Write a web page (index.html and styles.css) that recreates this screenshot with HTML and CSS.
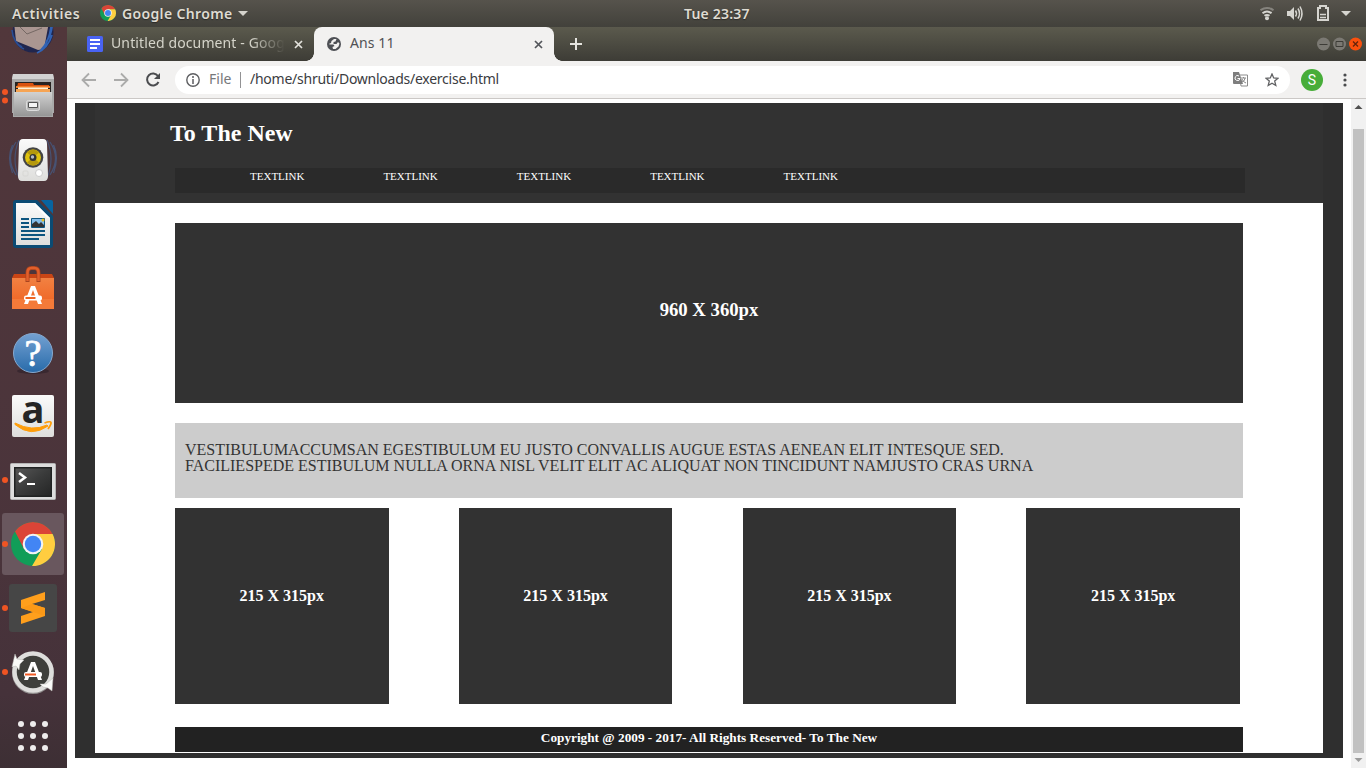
FILE: index.html
```html
<!DOCTYPE html>
<html lang="en">
<head>
<meta charset="utf-8">
<title>Ans 11</title>
<link rel="stylesheet" href="styles.css">
</head>
<body>
<header class="topbar">
  <span class="activities">Activities</span>
  <svg class="app-icon" viewBox="0 0 44 44"><use href="#chrome-logo"/></svg>
  <span class="app-name">Google Chrome</span>
  <svg class="caret" width="10" height="5"><path d="M0 0h10L5 5z" fill="#d5d3cd"/></svg>
  <span class="clock">Tue 23:37</span>
  <svg class="tray" width="106" height="27" fill="none" stroke="#d6d5d0">
    <g stroke-width="2"><path d="M.5 10.200q6.500-4.500 13 0" stroke="#85837d"/><path d="M2.500 13.200q4.500-3.500 9 0"/><path d="M4.500 15.800q2.500-1.800 5 0"/></g>
    <circle cx="7" cy="18.200" r="2" fill="#d6d5d0" stroke="none"/>
    <path d="M27 11h3l4-4v13l-4-4h-3z" fill="#d6d5d0" stroke="none"/>
    <path d="M35.500 10.500q2 3 0 6M38 8.500q3 5 0 10M40 6.500q4 7 0 14" stroke-width="1.500"/>
    <path d="M58 8h2V6h6v2h2v12H58z" stroke-width="2"/><path d="M60 14.500h6M60 17.500h6" stroke-width="1.500"/>
    <path d="M81 11h10l-5 5z" fill="#d6d5d0" stroke="none"/>
  </svg>
</header>
<div class="desktop">
  <nav class="dock">
    <div class="dock-items">
      <svg class="dock-item" viewBox="0 0 67 64">
        <circle cx="33" cy="32" r="20.500" fill="#20264e"/>
        <path d="M14 22h35l-5 27-6 1-22-9z" fill="#aa9691"/><path d="M20 27l7 7 15-6" fill="none" stroke="#756864"/>
        <path d="M41 50q8-8 10-23M37 53q11-5 15-18M46 42q5-6 6-15" fill="none" stroke="#3263b4" stroke-width="1.800"/><path d="M12 30q1 12 10 17M14 38q3 8 10 11" fill="none" stroke="#294d94" stroke-width="1.600"/>
      </svg>
      <svg class="dock-item" viewBox="0 0 67 64">
        <g fill="#f05423"><circle cx="5" cy="28" r="3"/><circle cx="5" cy="36.500" r="3"/></g>
        <path d="M13 10h40l1 5v34h-1v4H13v-4h-1V15z" fill="#a9a9a9"/><path d="M13 10h40l1 5H12z" fill="#d2d2d2"/>
        <path d="M15 18h36v10H15z" fill="#282321"/><path d="M18 19h15l1 2h15v2H17z" fill="#d9520f"/><path d="M16 22h34v2H16z" fill="#f07c28"/><path d="M18 23.500h30v1.500H18z" fill="#fff0d5"/><path d="M16 25h34v3H16z" fill="#f6a454"/>
        <path d="M14 28h38v24H14z" fill="url(#metal)"/>
        <rect x="26.500" y="36.500" width="13" height="10" rx="2" fill="#b9b9b9" stroke="#ddd"/><path d="M28.500 38.500h9v5h-9z" fill="#f5f5f5" stroke="#555"/>
      </svg>
      <svg class="dock-item" viewBox="0 0 67 64">
        <g fill="none" stroke="#475273" stroke-width="1.200"><path d="M16 14q-11 16 0 33M12.500 17q-6 12 0 28M19 12q-8 19 0 38M50 14q11 16 0 33M53.500 17q6 12 0 28M47 12q8 19 0 38"/></g>
        <path d="M23 11h20q4 0 4 5l1 32q0 5-4 5H22q-4 0-4-5l1-32q0-5 4-5z" fill="url(#white)"/>
        <circle cx="33" cy="29.500" r="10.300" fill="#444"/><circle cx="33" cy="29.500" r="8" fill="#dfc20e"/><path d="M33 29.500l-6-5q6-6 12 0zM33 29.500l-6 5q6 6 12 0z" fill="#b4980c"/><circle cx="33" cy="29.500" r="3.500" fill="#333"/><circle cx="32.500" cy="29" r="1.700" fill="#b5bbc5"/><circle cx="39" cy="45" r="3.500" fill="#fff" stroke="#ccc"/><rect x="23" y="43" width="5" height="5" rx="1" fill="none" stroke="#d7d7d4"/>
      </svg>
      <svg class="dock-item" viewBox="0 0 67 64">
        <path d="M16 8h21l16 16v29q0 3-3 3H16q-3 0-3-3V11q0-3 3-3z" fill="#0b4b74"/><path d="M41 8h10q2 0 2 2v12z" fill="#0864a0"/>
        <path d="M16 11h19l15 15v27H16z" fill="url(#white)"/><path d="M35 11v3l12 12h3z" fill="#fff"/>
        <path d="M21 27h8M21 31h8M21 35h8M21 39h24M21 43h24M21 47h18" stroke="#0d557f" stroke-width="2"/>
        <path d="M31.500 26.500h13v9h-13z" fill="#83bde9" stroke="#0d557f"/><path d="M32 35v-3l4-3 3 3 2-2 3 3v2z" fill="#333"/><circle cx="43" cy="28" r="1.500" fill="#e8ba24"/>
      </svg>
      <svg class="dock-item" viewBox="0 0 67 64">
        <path d="M14 18h38l2 4v31H12V22z" fill="#c94515"/><path d="M12 22h42v31H12z" fill="url(#orange)"/><path d="M12 43h42v10H12z" fill="#f47a39"/>
        <path d="M27.500 26v-9q0-5 4-5h3q4 0 4 5v9" fill="none" stroke="#a8441f" stroke-width="4"/><path d="M27.500 25v-8q0-5 4-5h3q4 0 4 5v8" fill="none" stroke="#e25f2b" stroke-width="2.500"/>
        <path d="M31 30h4l7 18h-4l-5-14-5 14h-4z" fill="#fff"/><rect x="24" y="39.500" width="18" height="5" rx="2" fill="#fff"/><path d="M25.500 42h10" stroke="#ef6422" stroke-width="2"/>
      </svg>
      <svg class="dock-item" viewBox="0 0 67 64">
        <ellipse cx="33" cy="51" rx="16" ry="3" fill="#392830"/><circle cx="33" cy="33" r="19.500" fill="url(#blue)" stroke="#86a9cf"/>
        <text x="33" y="46" class="help-mark" text-anchor="middle">?</text>
      </svg>
      <svg class="dock-item" viewBox="0 0 67 64">
        <rect x="12" y="11" width="42" height="42" rx="2" fill="url(#white)"/><text x="33" y="39" class="amazon-mark" text-anchor="middle">a</text>
        <path d="M15 39q17 9 32 2l1 1q-17 12-33-1.500z" fill="#ff9d0a" stroke="#ff9d0a"/><path d="M44.500 39q6-2 6.500-.5t-3 6.500" fill="none" stroke="#ff9d0a" stroke-width="1.800"/>
      </svg>
      <svg class="dock-item" viewBox="0 0 67 64">
        <circle cx="5" cy="32" r="3" fill="#f05423"/><rect x="10.500" y="15.500" width="45" height="36" rx="1" fill="#ddd" stroke="#b5b5b5"/><path d="M14 19h38v30H14z" fill="#202222"/><path d="M15.500 20.500h35v27h-35z" fill="url(#screen)"/>
        <path d="M19 25l6 4.500-6 4.500" fill="none" stroke="#fff" stroke-width="2.500"/><path d="M27 36h8" stroke="#fff" stroke-width="2"/>
      </svg>
      <svg class="dock-item" viewBox="0 0 67 64">
        <rect x="2" y="1" width="62" height="62" rx="3" fill="#69575e"/><circle cx="5" cy="32" r="3" fill="#f05423"/>
        <g transform="translate(11 10)"><use href="#chrome-logo"/></g>
      </svg>
      <svg class="dock-item" viewBox="0 0 67 64">
        <circle cx="5" cy="32" r="3" fill="#f05423"/><rect x="9" y="8" width="48" height="48" rx="3" fill="#464646"/>
        <path d="M21 24l24-8v8l-13 4 13 4v8l-24 8v-8l12-4-12-4z" fill="#ff9f1c"/><path d="M21 32l24 8v-8l-13-4z" fill="#fb9917"/>
      </svg>
      <svg class="dock-item" viewBox="0 0 67 64">
        <circle cx="5" cy="32" r="3" fill="#f05423"/><circle cx="33" cy="33" r="21" fill="#8f8c8c"/><circle cx="33" cy="32" r="18.500" fill="#3e3f3b" stroke="#dededc" stroke-width="4.500"/>
        <path d="M15 14l2 5 7 1-4 4-1 6-3-4-4 1zM53 38l-1 13-4-3-5-1-3-3 6 0z" fill="#fafaf8" stroke="#b7b6b3" stroke-width=".5"/>
        <path d="M31 22h4l7 18h-4l-5-14-5 14h-4z" fill="#fff"/><rect x="24" y="32" width="18" height="5" rx="2" fill="#fff"/><path d="M25 34.500h11" stroke="#f05b24" stroke-width="2"/>
      </svg>
      <svg class="dock-item" viewBox="0 0 67 64">
        <g fill="#eeecec"><circle cx="21" cy="20" r="3"/><circle cx="33" cy="20" r="3"/><circle cx="45" cy="20" r="3"/><circle cx="21" cy="32" r="3"/><circle cx="33" cy="32" r="3"/><circle cx="45" cy="32" r="3"/><circle cx="21" cy="44" r="3"/><circle cx="33" cy="44" r="3"/><circle cx="45" cy="44" r="3"/></g>
      </svg>
    </div>
  </nav>
  <section class="browser">
    <div class="tabs">
      <div class="tab">
        <svg width="16" height="16"><rect width="16" height="16" rx="1.500" fill="#4963f3"/><path d="M3 4h10M3 8h10M3 12h7" stroke="#fff" stroke-width="2"/></svg>
        <span class="tab-title faded">Untitled document - Goog</span>
        <svg width="9" height="9"><path d="M1 1l7 7M8 1l-7 7" stroke="#e3e2dc" stroke-width="1.700"/></svg>
      </div>
      <div class="tab active">
        <svg width="14" height="14" viewBox="0 0 14 14"><circle cx="7" cy="7" r="7" fill="#4e5055"/><path d="M7 2h2.500l-1 2.500-2 .5v2h3l1.500-2 1.500 1.500-1 3-3 2.500H6l-.5-2 2-1-1-1.500H3L1.800 7 4 6l.5-2z" fill="#f2f1f0"/></svg>
        <span class="tab-title">Ans 11</span>
        <svg width="9" height="9"><path d="M1 1l7 7M8 1l-7 7" stroke="#53555a" stroke-width="1.700"/></svg>
      </div>
      <svg class="new-tab" width="12" height="12"><path d="M0 6h12M6 0v12" stroke="#e5e4df" stroke-width="2"/></svg>
      <svg class="window-buttons" width="48" height="16">
        <circle cx="7.500" cy="8" r="6.500" fill="#7b7973"/><path d="M3.500 8.500h8" stroke="#3d3c37"/>
        <circle cx="23.500" cy="8" r="6.500" fill="#7b7973"/><path d="M20 5.500h7v5h-7z" stroke="#3d3c37" fill="none"/>
        <circle cx="39.500" cy="8" r="6.500" fill="#f9500d"/><path d="M37 5.500l5 5M42 5.500l-5 5" stroke="#65240c" stroke-width="1.300"/>
      </svg>
    </div>
    <div class="toolbar">
      <svg class="nav-icons" width="108" height="36" fill="none" stroke="#ababaa" stroke-width="1.800">
        <path d="M29 18H16M22 11.500L15.500 18l6.500 6.500M47 18h13M54 11.500l6.500 6.500-6.500 6.500"/>
        <path d="M91 14a6 6 0 1 0 .5 6" stroke="#4b4c4f" stroke-width="2"/><path d="M93 11v6h-6z" fill="#4b4c4f" stroke="none"/>
      </svg>
      <div class="address">
        <svg width="14" height="14"><circle cx="7" cy="7" r="6.200" fill="none" stroke="#5d5e61" stroke-width="1.400"/><path d="M7 3v2M7 6v5" stroke="#5d5e61" stroke-width="1.500"/></svg>
        <span class="scheme">File</span><i class="divider"></i><span class="url">/home/shruti/Downloads/exercise.html</span>
        <svg class="translate" width="15" height="15"><path d="M6.500 3h8v11H8z" fill="#fff" stroke="#8b8b8b"/><path d="M0 0h6l4 12H1q-1 0-1-1z" fill="#7e7e7e"/><path d="M6 4a2.500 2.500 0 1 0 1 2.500H4.500" fill="none" stroke="#fff"/><path d="M8 6h5M10.500 5v1M12 6q0 3-3 4M9 7q1 3 4 4" fill="none" stroke="#888"/></svg>
        <svg class="star" width="14" height="14"><path d="M7 1l1.700 4 4.300.3-3.300 2.800 1.100 4.400L7 10.200l-3.800 2.300 1.100-4.400L1 5.300 5.300 5z" fill="none" stroke="#606163" stroke-width="1.300"/></svg>
      </div>
      <span class="avatar">S</span>
      <svg class="more" width="4" height="14" fill="#4a4b4d"><circle cx="2" cy="2" r="1.600"/><circle cx="2" cy="7" r="1.600"/><circle cx="2" cy="12" r="1.600"/></svg>
    </div>
    <div class="viewport">
      <main class="page">
        <div class="site">
          <header class="site-header"><h1>To The New</h1>
            <nav class="links"><a>TEXTLINK</a><a>TEXTLINK</a><a>TEXTLINK</a><a>TEXTLINK</a><a>TEXTLINK</a></nav>
          </header>
          <div class="content">
            <section class="hero">960 X 360px</section>
            <p class="intro">VESTIBULUMACCUMSAN EGESTIBULUM EU JUSTO CONVALLIS AUGUE ESTAS AENEAN ELIT INTESQUE SED.<br>FACILIESPEDE ESTIBULUM NULLA ORNA NISL VELIT ELIT AC ALIQUAT NON TINCIDUNT NAMJUSTO CRAS URNA</p>
            <section class="cards"><div class="card">215 X 315px</div><div class="card">215 X 315px</div><div class="card">215 X 315px</div><div class="card">215 X 315px</div></section>
            <footer class="copyright">Copyright @ 2009 - 2017- All Rights Reserved- To The New</footer>
          </div>
        </div>
      </main>
      <div class="scrollbar">
        <svg width="15" height="30"><path d="M3.500 10h8l-4-4z" fill="#505050"/></svg>
        <div class="thumb"></div>
        <svg width="15" height="15"><path d="M3.500 5h8l-4 4z" fill="#9b9b9b"/></svg>
      </div>
    </div>
  </section>
</div>
<svg class="defs" width="0" height="0">
  <defs>
    <linearGradient id="metal" x2="0" y2="1"><stop stop-color="#d2d2d2"/><stop offset="1" stop-color="#969696"/></linearGradient>
    <linearGradient id="white" x2="0" y2="1"><stop stop-color="#fafafa"/><stop offset="1" stop-color="#dededc"/></linearGradient>
    <linearGradient id="orange" x2="0" y2="1"><stop stop-color="#f18142"/><stop offset="1" stop-color="#ef601f"/></linearGradient>
    <linearGradient id="blue" x2="0" y2="1"><stop stop-color="#74a1d2"/><stop offset="1" stop-color="#286baa"/></linearGradient>
    <linearGradient id="screen" x2="1" y2="1"><stop stop-color="#555"/><stop offset=".5" stop-color="#3a3b3b"/><stop offset="1" stop-color="#252626"/></linearGradient>
    <g id="chrome-logo">
      <circle cx="22" cy="22" r="22" fill="#119d58"/>
      <path d="M13 27L4 9.500A22 22 0 0 1 41.600 12H22z" fill="#db4437"/>
      <path d="M22 12h19.600A22 22 0 0 1 21 44l10-17z" fill="#ffcd40"/>
      <circle cx="22" cy="22" r="10.300" fill="#f4f4f4"/><circle cx="22" cy="22" r="8.200" fill="#4285f4"/>
    </g>
  </defs>
</svg>
</body>
</html>
```
FILE: styles.css
```css
* { box-sizing: border-box; }
body { margin: 0; width: 1366px; height: 768px; overflow: hidden; display: flex; flex-direction: column; font-family: "Noto Sans", sans-serif; background: #fff; }
svg { display: block; flex: none; }
.defs { position: absolute; }
.topbar { height: 27px; flex: none; display: flex; align-items: center; background: linear-gradient(#56534c, #42413b); color: #dfdbd2; font-size: 14px; font-weight: 600; white-space: nowrap; line-height: 25px; padding-bottom: 1px; position: relative; z-index: 2; text-shadow: 0 1px 1px #2b2a27; }
.activities { width: 88px; padding-left: 12px; letter-spacing: .58px; }
.app-icon { width: 16px; height: 16px; margin-left: 12px; }
.app-name { width: 111px; margin-left: 6px; letter-spacing: .35px; }
.caret { margin-left: 5px; }
.clock { margin-left: 436px; letter-spacing: .2px; }
.tray { margin-left: auto; }
.desktop { flex: 1; min-height: 0; display: flex; }
.dock { width: 67px; flex: none; background: linear-gradient(#51373b, #4a343b 70%, #45323a 90%, #3d2f34); overflow: hidden; }
.dock-items { margin-top: -27px; }
.dock-item { width: 67px; height: 64px; }
.help-mark { font: 400 38px "Liberation Serif", serif; fill: #fff; stroke: #fff; stroke-width: .8px; }
.amazon-mark { font: 700 38px/1 "Open Sans", sans-serif; fill: #252525; }
.browser { flex: 1; display: flex; flex-direction: column; min-width: 0; }
.tabs { height: 34px; flex: none; display: flex; align-items: center; background: linear-gradient(#5b5a4d, #3d3c36); }
.tab { width: 247px; height: 34px; display: flex; align-items: center; padding: 0 11px 0 20px; color: #d5d4ca; font-size: 14px; line-height: 20px; }
.tab-title { flex: 1; margin: -2px 0 0 9px; white-space: nowrap; letter-spacing: .1px; }
.faded { margin: -2px 9px 0 8px; letter-spacing: .12px; -webkit-mask-image: linear-gradient(90deg, #000 80%, transparent); }
.active { position: relative; width: 240px; padding-left: 13px; background: #f2f1f0; color: #505154; border-radius: 8px 8px 0 0; }
.active::before, .active::after { content: ""; position: absolute; bottom: 0; width: 8px; height: 8px; }
.active::before { left: -8px; background: radial-gradient(circle at 0 0, transparent 7.5px, #f2f1f0 8px); }
.active::after { right: -8px; background: radial-gradient(circle at 100% 0, transparent 7.5px, #f2f1f0 8px); }
.new-tab { margin-left: 16px; }
.window-buttons { margin: 0 2px 0 auto; }
.toolbar { height: 38px; flex: none; display: flex; align-items: center; background: #f2f1f0; border-bottom: 1px solid #cbc8c6; }
.address { width: 1115px; height: 28px; border-radius: 14px; background: #fff; display: flex; align-items: center; padding: 0 11px; font-size: 14px; line-height: 26px; }
.scheme { width: 24px; margin: -2px 0 0 9px; color: #77787b; }
.divider { width: 1px; height: 16px; background: #929294; margin: 0 9px 0 7px; }
.url { margin-top: -2px; color: #3b3c3f; letter-spacing: -.25px; white-space: nowrap; }
.translate { margin-left: auto; }
.star { margin-left: 17px; }
.avatar { width: 22px; height: 22px; margin-left: 11px; border-radius: 50%; background: #47ad39; color: #fff; text-align: center; font: 14px/22px Roboto, sans-serif; }
.more { margin-left: 20px; }
.viewport { flex: 1; min-height: 0; display: flex; font-family: "Liberation Serif", serif; }
.page { width: 1284px; padding: 4px 8px 10px; }
.site { height: 655px; padding: 0 20px 5px; background: #2f2f2f; }
.site-header { height: 100px; background: #323232; padding: 16px 78px 10px 75px; }
h1 { margin: 0; font-size: 24px; line-height: 28px; color: #fff; height: 49px; }
.links { margin-left: 5px; height: 25px; background: #2a2a2a; display: flex; padding-left: 75px; font-size: 11px; line-height: 17px; color: #fff; }
.links a { width: 133.4px; }
.content { height: 550px; background: #fff; padding: 20px 80px 1px; }
.hero { height: 180px; background: #323232; color: #fff; font-size: 18.72px; font-weight: 700; line-height: 174px; text-align: center; }
.intro { height: 75px; margin: 20px 0 10px; padding: 19px 10px; background: #ccc; color: #333; font-size: 16px; line-height: 16px; white-space: nowrap; }
.cards { display: flex; gap: 70.2px; height: 196px; }
.card { width: 213.6px; background: #323232; color: #fff; text-align: center; font-size: 16px; font-weight: 700; line-height: 175px; }
.copyright { height: 25px; margin-top: 23px; background: #222; color: #fff; font-size: 13.28px; font-weight: 700; line-height: 22px; text-align: center; }
.scrollbar { width: 15px; background: #f1f1f1; display: flex; flex-direction: column; }
.thumb { width: 11px; height: 624px; flex: none; margin-left: 2px; background: #c1c1c1; }
```
